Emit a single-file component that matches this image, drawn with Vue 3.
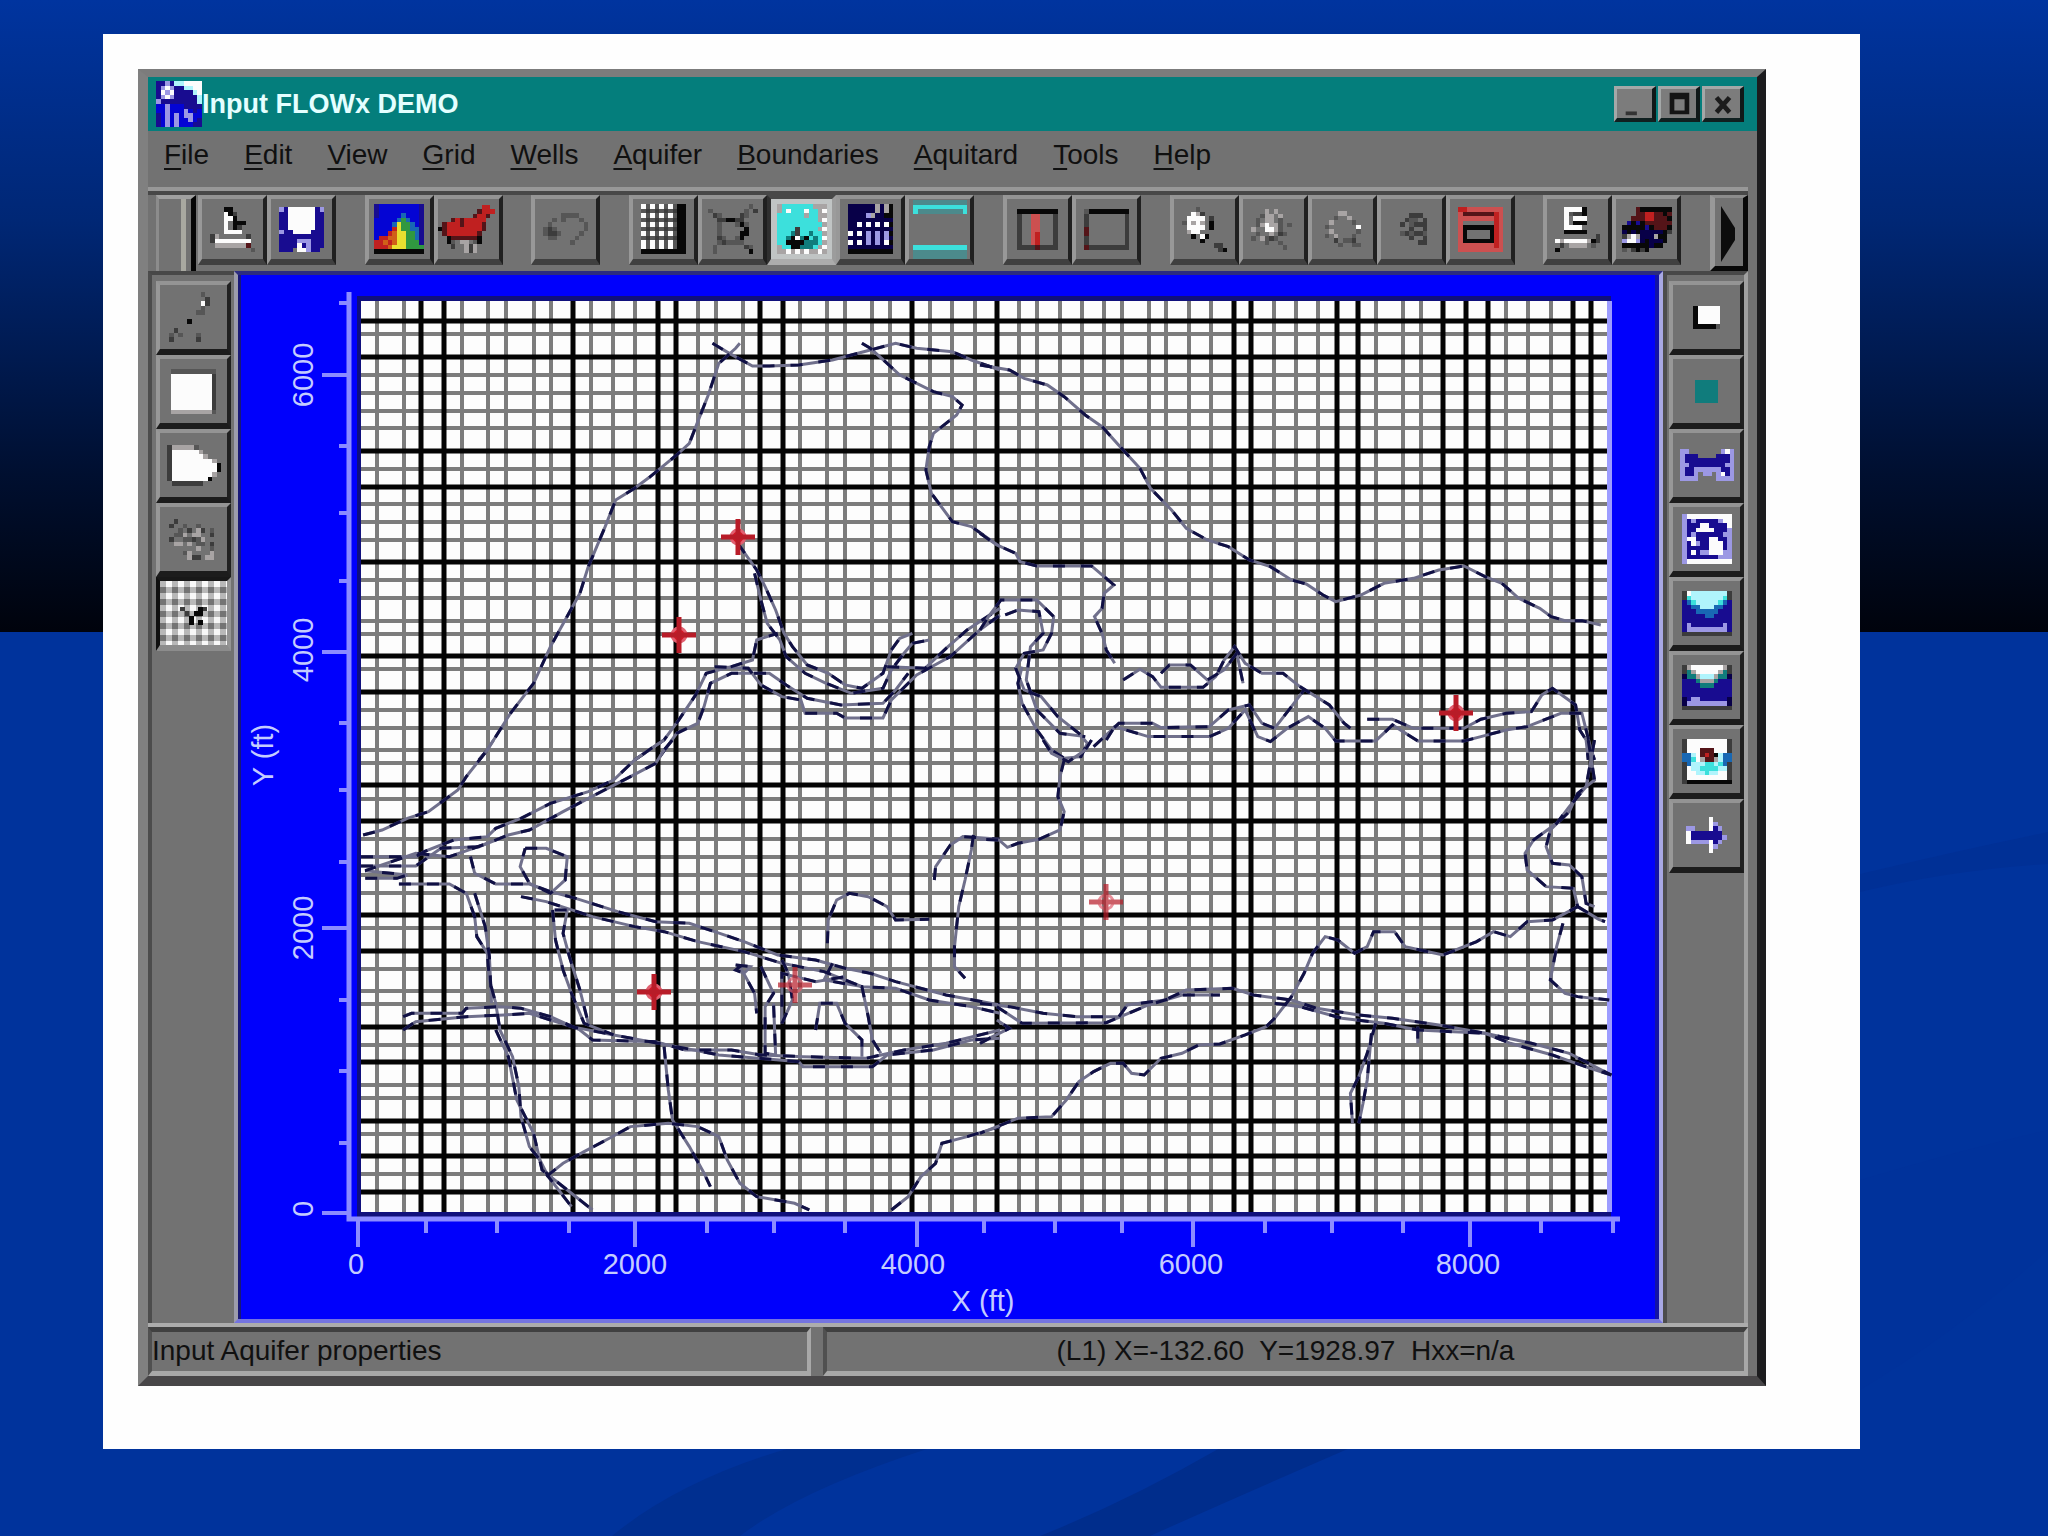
<template>
    <div class="slide">
        <svg class="backdrop" viewBox="0 0 2048 1536" preserveAspectRatio="none" aria-hidden="true">
            <defs>
                <linearGradient id="sky" x1="0" y1="0" x2="0" y2="1">
                    <stop offset="0" stop-color="#00349f" />
                    <stop offset="0.35" stop-color="#002775" />
                    <stop offset="0.75" stop-color="#000f30" />
                    <stop offset="1" stop-color="#00030c" />
                </linearGradient>
            </defs>
            <rect width="2048" height="1536" fill="#00339c" />
            <rect width="2048" height="632" fill="url(#sky)" />
            <path d="M1860 874Q1960 850 2048 832V864Q1950 870 1860 892Z" fill="#003096" />
            <path d="M612 1536Q680 1480 790 1448H930Q800 1490 740 1536Z" fill="#002f90" />
            <path d="M1040 1536Q1130 1500 1220 1448H1350Q1230 1500 1150 1536Z" fill="#002d8c" />
            <path d="M1860 1180Q1960 1150 2048 1130V1250Q1960 1330 1860 1390Z" fill="#00329b" />
        </svg>

        <main class="frame">
            <section class="window">
                <header class="titlebar">
                    <svg class="app-icon" viewBox="0 0 10 10" shape-rendering="crispEdges" aria-hidden="true">
                        <rect v-for="(p, i) in pixels(icons.app)" :key="i" :x="p.x" :y="p.y" :width="p.w" height="1" :fill="p.fill" />
                    </svg>
                    <h1>Input FLOWx DEMO</h1>
                    <div class="window-buttons">
                        <button type="button" aria-label="Minimize">
                            <svg viewBox="0 0 30 30"><path d="M5 23h12v4H5z" fill="#333" /></svg>
                        </button>
                        <button type="button" aria-label="Maximize">
                            <svg viewBox="0 0 30 30"><path d="M5 3h21v23H5zM10 10v12h11V10z" fill="#141414" fill-rule="evenodd" /></svg>
                        </button>
                        <button type="button" aria-label="Close">
                            <svg viewBox="0 0 30 30"><path d="M8 8l14 16M22 8L8 24" stroke="#1c1c1c" stroke-width="5" /></svg>
                        </button>
                    </div>
                </header>

                <nav class="menubar">
                    <button v-for="item in menus" :key="item" type="button"><u>{{ item[0] }}</u>{{ item.slice(1) }}</button>
                </nav>

                <div class="toolbar">
                    <div class="grip"></div>
                    <div class="groups">
                        <div v-for="(group, g) in toolbar" :key="g" class="group">
                            <button v-for="tool in group" :key="tool" type="button" class="tool" :class="{ pressed: tool === 'aquifer' }" :aria-label="tool">
                                <svg :viewBox="box(icons[tool])" :width="size(icons[tool][0].length)" :height="size(icons[tool].length)" shape-rendering="crispEdges">
                                    <rect v-for="(p, i) in pixels(icons[tool])" :key="i" :x="p.x" :y="p.y" :width="p.w" height="1" :fill="p.fill" />
                                </svg>
                            </button>
                        </div>
                        <button type="button" class="more" aria-label="More tools">
                            <svg viewBox="0 0 16 60"><path d="M0 4L14 26V38L0 60Z" fill="#0c0c0c" /></svg>
                        </button>
                    </div>
                </div>

                <div class="workspace">
                    <aside class="side left">
                        <button v-for="tool in leftTools" :key="tool" type="button" class="tool" :class="{ checked: tool === 'pick' }" :aria-label="tool">
                            <svg :viewBox="box(icons[tool])" :width="size(icons[tool][0].length)" :height="size(icons[tool].length)" shape-rendering="crispEdges">
                                <rect v-for="(p, i) in pixels(icons[tool])" :key="i" :x="p.x" :y="p.y" :width="p.w" height="1" :fill="p.fill" />
                            </svg>
                        </button>
                    </aside>

                    <div class="plot">
                        <svg viewBox="0 0 1414 1044" role="img" aria-label="Model grid">
                            <rect x="116" y="21" width="1254" height="921" fill="#10107c" />
                            <rect x="120" y="26" width="1250" height="911" fill="#fdfdfd" />
                            <path :d="lines(thinX, thinY)" stroke="#7c7c7c" stroke-width="4" />
                            <path :d="lines(thickX, thickY)" stroke="#040404" stroke-width="5" />
                            <rect x="1366" y="26" width="5" height="911" fill="#9c9cff" />

                            <g v-for="(tile, t) in tiles" :key="t" :transform="tile.at" class="trace">
                                <polyline v-for="(points, i) in tile.traces" :key="i" :points="points" />
                                <polyline v-for="(points, i) in tile.traces" :key="'d' + i" :points="points" class="dash" />
                            </g>

                            <g v-for="(well, i) in wells" :key="'w' + i" :transform="`translate(${well.x} ${well.y})`" :opacity="well.faded ? 0.7 : 1">
                                <circle r="7" :fill="well.faded ? 'none' : '#d81828'" stroke="#e06070" stroke-width="3" />
                                <path d="M-17 0H17M0-18V18" stroke="#b81c28" stroke-width="5" />
                            </g>

                            <g stroke="#8c8cff" stroke-width="4">
                                <path d="M108 17V944H1379" fill="none" stroke-width="5" />
                                <path v-for="(x, i) in ticksX" :key="'x' + i" :d="`M${x} 944V${i % 4 ? 958 : 972}`" />
                                <path v-for="(y, i) in ticksY" :key="'y' + i" :d="`M108 ${y}H${i % 4 ? 98 : 81}`" />
                            </g>
                            <g class="axis-text">
                                <text v-for="(x, i) in [115, 394, 672, 950, 1227]" :key="x" :x="x" y="999">{{ i * 2000 }}</text>
                                <text v-for="(y, i) in [934, 653, 375, 100]" :key="y" :transform="`translate(72 ${y}) rotate(-90)`">{{ i * 2000 }}</text>
                                <text x="742" y="1036">X (ft)</text>
                                <text transform="translate(32 480) rotate(-90)">Y (ft)</text>
                            </g>
                        </svg>
                    </div>

                    <aside class="side right">
                        <button v-for="tool in rightTools" :key="tool" type="button" class="tool" :aria-label="tool">
                            <svg :viewBox="box(icons[tool])" :width="size(icons[tool][0].length)" :height="size(icons[tool].length)" shape-rendering="crispEdges">
                                <rect v-for="(p, i) in pixels(icons[tool])" :key="i" :x="p.x" :y="p.y" :width="p.w" height="1" :fill="p.fill" />
                            </svg>
                        </button>
                    </aside>
                </div>

                <footer class="statusbar">
                    <div class="hint">Input Aquifer properties</div>
                    <div class="coords">(L1) X=-132.60&nbsp; Y=1928.97&nbsp; Hxx=n/a</div>
                </footer>
            </section>
        </main>
    </div>
</template>

<script setup>
const menus = ['File', 'Edit', 'View', 'Grid', 'Wells', 'Aquifer', 'Boundaries', 'Aquitard', 'Tools', 'Help']

const toolbar = [
    ['open', 'save'],
    ['spectrum', 'run'],
    ['undo'],
    ['grid', 'bounds', 'aquifer', 'cells', 'layers'],
    ['column', 'row'],
    ['zoom', 'zoomIn', 'zoomOut', 'pan', 'extent'],
    ['export', 'stack']
]
const leftTools = ['line', 'square', 'polygon', 'scatter', 'pick']
const rightTools = ['cell', 'zone', 'section', 'porosity', 'basin', 'head', 'plume', 'forward']

const palette = {
    w: '#fcfcfc', k: '#080808', d: '#3c3c3c', g: '#565656', l: '#a8a4a4',
    b: '#0404d4', n: '#180c90', v: '#080048', p: '#9c98e4', r: '#c02020',
    R: '#cc5050', m: '#541418', c: '#3ce0dc', t: '#107c7c', q: '#4c8a8c',
    y: '#e8e030', o: '#d06018', e: '#309840', s: '#1868b4', i: '#b0f4fc'
}

// Icons are drawn as pixel rows, one palette letter per pixel
const icons = {
    app: ['nnpniiwwww', 'npwpnniiww', 'nwpwnnnniw', 'npwpnnnnni', 'pnnnnnnnni', 'bbpbbbnnnn', 'bbpbbbpbnb', 'nbpbpbppbb', 'nbpbpbbpbn', 'nbpbpbbbnn'],
    open: ['...kk.....', '...wkd....', '...wwk....', '...w.kkk..', '...w.kd...', '...wwww...', 'dl......d.', 'dwwwwwwww.', '.lllllllm.', '.........g'],
    save: ['pnwwwwwwnp', 'nnwwwwwwnn', 'nnwwwwwwnn', 'nnwwwwwwnn', 'nnwwwwwwnn', 'pnnwwwwnnn', 'nnnnnnnnnn', 'nnnnpppnnn', 'nnnnwnpnnn', 'nnn.wwpnn.'],
    spectrum: ['nbbbbbbbbbn', 'nbbbbbbbbbn', 'nbbbbbsbbbn', 'bbbbbsesbbn', 'bbbbsyeesbn', 'bbbbryeessn', 'bbbroyyeesn', 'brrooyyeesn', 'rroroyyeeen', 'rrroyyyeeee', 'kkkkkkkkkkk'],
    run: ['..........rr..', '.........mrrr.', '........mrrm..', '...mrmrrrrr...', '.mrrrmrrrrm...', 'kmrrrrrrrrm...', '.mrrrrrrrm....', '..kmmmmmmk....', '..kg.ll.gk....', '...d..ldl.....', '......ldl.....'],
    undo: ['....gggg..', '..g.g...g.', '.g.......g', 'gdg......g', 'gddg....g.', '.gg....g..', '......g...'],
    grid: ['wgwgwgwgkk', 'gdgdgdgdkk', 'wgwgwgwgkk', 'gdgdgdgdkk', 'wgwgwgwgkk', 'gdgdgdgdkk', 'wgwgwgwgkk', 'gdgdgdgdkk', 'wgwgwgwgkk', 'wgwgwgwgkk', 'kkkkkkkkkk'],
    bounds: ['.........g.', 'g.......g.d', '.dg....dg..', '..ddkkdd...', '..g...gkg..', '..g.....k..', '..g....kk..', '..dg..gk...', '..gdgggg...', '.g......dg.', '.g.......k.'],
    aquifer: ['lccccccclll', 'lcwcccwcclw', 'cccccclccll', 'ccccccccclw', 'ccccccccccl', 'ccccdcccclw', 'ccctdcctccl', 'cctkwtkctcw', 'cckkkktttcl', 'lcckktttclw', 'llwlwlwllwl'],
    cells: ['vvvvvvlvlk', 'vvvvvvlvlk', 'vvvvplvvkk', 'vvvvvvvvvv', 'vvwvwvwvwk', 'vvvvvvvvvv', 'wvwvpvpvpk', 'vvvvpvpvpv', 'wvwvpvpvwk', 'vvvvvvvvvv', 'kkkkkkkkkk'],
    layers: ['qqqqqqqqqqqq', 'cccccccccccc', 'cqqqqqqqqqqc', '............', '............', '............', '............', '............', '............', '............', 'cccccccccccc', 'qqqqqqqqqqqq', 'qqqqqqqqqqqq'],
    column: ['kkkkkkkkk', 'd..RR...d', 'd..RR...d', 'd..RR...d', 'd..RR...d', 'd..Rr...d', 'd..Rr...d', 'd..Rr...d', 'ddddmdddd'],
    row: ['gkkkkkkkkk', 'd........d', 'd........d', 'd........d', 'm........d', 'm........d', 'd........d', 'd........d', 'mddddddddd'],
    zoom: ['...g......', '..wld.....', '.wwww.d...', 'gwlwl.k...', '.wwww.k...', '.lww......', '..k.wk....', '....k.....', '.......dd.', '........dk'],
    zoomIn: ['...l.l....', '..gll.l...', '.g.ll.g...', '.glwllg.g.', 'l..wwlg...', '.g..l.dg..', 'g.lgdg....', '...g..g...', '.......g..'],
    zoomOut: ['....ll....', '...g..l...', '..l....g..', '.g......w.', '..l.....g.', '.g.l...g..', '...d.ggd..', '....g..gg.'],
    pan: ['....ddd..', '...dgg.d.', '..d.gddd.', '....d..d.', '..gdgddg.', '....d..d.', '......dd.'],
    extent: ['rrRRRRRRRR', 'RmmmmmmmrR', 'RRRRRRRRrR', 'R.......rR', 'RkkkkkkkrR', 'Rk.....krR', 'Rk.....krR', 'RkkkkkkkrR', 'RRRRRRRRrR', 'RRRRRRRRRR'],
    export: ['..wwwwk...', '..wgddk...', '..w.www...', '..w.kkk...', '..wwww....', '..kkkkk...', '.........d', 'wlwwwwwlkd', '.d.llll.g.', 'k.........'],
    stack: ['...mkkkkkkk', '...mmrrmmkm', '..mmmrrmmmk', '.nknkmmmmmm', 'kkkkknkmmmk', 'vkvkvvvvvkd', 'dlwlvvvlkk.', 'pwwpvkvvvk.', 'kkkkkkvkk..', 'g.dkdk.....'],
    line: ['.......g...', '........d..', '.......wd..', '.......g...', '......gg...', '...........', '....k......', '...........', '.d.........', 'g.g...g....', 'd.....d....'],
    square: ['gggggggggg', 'wwwwwwwwwd', 'wwwwwwwwwd', 'wwwwwwwwwd', 'wwwwwwwwwd', 'wwwwwwwwwd', 'wwwwwwwwwd', 'wwwwwwwwwd', 'wwwwwwwwwd', 'lllllllllg'],
    polygon: ['dlllllg.....', 'dwwwwwwl....', 'dwwwwwwwl...', 'dwwwwwwwwwl.', 'dwwwwwwwwwwk', 'dwwwwwwwwwwk', 'dwwwwwwwwwl.', 'dwwwwwwwwk..', '.ddddddd....'],
    scatter: ['.d.........', 'd..g..g....', '..g.d.ld.g.', '.ggl.ll..d.', 'd..ggdgl...', '.ll.l.gg.d.', '......l..g.', '...gl....l.', '....ldd.ll.'],
    pick: ['......', 'd...kd', '.d.kk.', '..k...', '..k.k.'],
    cell: ['kwwwww', 'kwwwww', 'kwwwww', 'kwwwww', 'kkkkkg'],
    zone: ['ttttt', 'ttttt', 'ttttt', 'ttttt', 'ttttt'],
    section: ['pp.......pwp', 'pnnn....nnnp', 'pnnnnnnnnnnp', 'ppnnnnnnnnpp', 'pnnppppppnnp', 'pnnp.pp.pwnp', 'pppp....pppp'],
    porosity: ['pwwwwwwwwww', 'pnpnnnnnpww', 'pnnnwwnnnnw', 'pnnwwwwnnnp', 'pnpnnnnnnpp', 'pwwnnnwwnnp', 'pnwpnnwwwnp', 'pnnnnnwwwnp', 'pnwnppwwwpp', 'pnnnnnnnppp', 'pwwwwwwwwww'],
    basin: ['dwiiiiiiiid', 'dciiiiiiicd', 'nsciiiiicsn', 'nnssiiissnn', 'nnnsssssnnn', 'nnnnnssnnnn', 'nnnnnnnnnnn', 'npnnnnnnnpn', 'npppppppppn', 'ddddddddddd'],
    head: ['dlwwwwwwwld', 'dtlwwwwwltd', 'vttliiilttv', 'nnntllltnnn', 'nnnntttnnnn', 'nnnnnnnnnnn', 'nnnnnnnnnnn', 'vnppnnnnnnv', 'vpppppppppv', 'ddddddddddd'],
    plume: ['dwwwwwwwwwd', 'dwwwwwwwwwd', 'dwwwmmmwwwd', 'ssiwmrmkiss', 'sscwlmmliss', 'dsiiiccicsd', 'dwiicccciid', 'dwwiiciiwwd', 'dwwwwwwwwwd', 'dkkkkkkkkkk'],
    forward: ['.....w...', '.....wp..', 'pp...wnp.', 'wnnnnnnn.', 'wnnnnnnnp', 'wppppwnp.', '.....wp..', '.....w...']
}

// Neighbouring pixels of one colour become a single rect
const pixels = (rows) => {
    const out = []
    rows.forEach((row, y) => {
        let x = 0
        while (x < row.length) {
            let end = x + 1
            while (row[end] === row[x]) end++
            if (row[x] !== '.') out.push({ x, y, w: end - x, fill: palette[row[x]] })
            x = end
        }
    })
    return out
}
const box = (rows) => `0 0 ${rows[0].length} ${rows.length}`
const size = (n) => Math.round(n * 4.5)

const thickX = [180, 203, 332, 417, 435, 519, 542, 671, 756, 993, 1010, 1096, 1117, 1202, 1225, 1247, 1332, 1350]
const thinX = [136, 163, 221, 247, 265, 293, 310, 350, 372, 394, 457, 475, 502, 559, 586, 604, 631, 649, 689, 711, 734, 778, 796, 819, 841, 863, 881, 908, 925, 948, 970, 1033, 1055, 1077, 1135, 1162, 1180, 1265, 1287, 1310]
const thickY = [46, 82, 176, 212, 287, 381, 417, 510, 546, 640, 676, 752, 787, 846, 881, 917]
const thinY = [59, 100, 118, 136, 153, 194, 229, 247, 265, 305, 323, 346, 359, 394, 435, 453, 475, 488, 524, 564, 582, 600, 618, 653, 694, 716, 729, 770, 810, 823, 859, 899]
const lines = (xs, ys) => xs.map((x) => `M${x} 26V937`).join('') + ys.map((y) => `M120 ${y}H1370`).join('')

const ticksX = [117, 185, 256, 328, 394, 466, 533, 604, 676, 743, 814, 881, 952, 1024, 1091, 1162, 1229, 1300, 1372]
const ticksY = [938, 868, 796, 725, 653, 587, 515, 448, 377, 306, 238, 171, 100, 28]

const wells = [
    { x: 497, y: 262 },
    { x: 438, y: 360 },
    { x: 1215, y: 438 },
    { x: 413, y: 717 },
    { x: 554, y: 710, faded: true },
    { x: 865, y: 627, faded: true }
]

// The base map comes in four sheets: NW, NE, SW, SE
const tiles = [
    {
        at: 'translate(99 5) scale(.4209 .3333)',
        traces: [
            '330,1440 350,1410 405,1300 460,1210 500,1100 535,1020 570,940 590,860 610,800 630,740 655,660 700,625 735,592 800,525 830,490 850,425 875,345 900,250 940,205 950,190',
            '885,190 925,220 980,258 1020,258 1090,255 1170,240 1260,210 1320,190 1370,205 1455,215 1500,240 1568,270',
            '1240,190 1260,205 1300,250 1330,285 1410,335 1455,350 1478,375 1465,405 1410,460 1400,500 1392,570 1405,640 1455,725 1500,740 1568,800',
            '945,790 990,870 1010,920 1035,990 1055,1060 1075,1100 1110,1155 1160,1180 1200,1215 1240,1225 1290,1180 1310,1110 1330,1075 1360,1060',
            '985,880 1000,960 1015,1030 1045,1080 1060,1130 1105,1180 1155,1210 1215,1240 1290,1225 1310,1170 1340,1120 1360,1090 1400,1080',
            '700,1440 770,1380 805,1320 845,1245 870,1180 930,1160 980,1140 990,1080 1040,1060',
            '760,1430 800,1360 850,1330 865,1280 880,1210 930,1180 1020,1180 1060,1215 1110,1255 1190,1275 1290,1270 1320,1230 1350,1180',
            '890,1160 970,1165 1000,1215 1050,1250 1095,1260 1105,1300 1180,1300 1200,1314 1290,1314 1310,1260 1370,1185 1450,1130 1520,1050 1568,1005',
            '1300,1160 1390,1165 1440,1105 1490,1050 1568,985'
        ]
    },
    {
        at: 'translate(739 5) scale(.4209 .3333)',
        traces: [
            '0,255 70,270 105,295 160,315 200,350 250,405 290,440 340,510 380,565 405,625 455,690 490,745 540,780 590,800 640,840 690,860 740,900 775,912 815,945 845,965 905,945 960,910 1030,895 1090,870 1150,858 1200,890 1240,910 1280,955 1330,985 1357,1010 1390,1022 1430,1022 1475,1035',
            '0,760 40,795 85,820 95,845 135,858 265,858 295,890 318,915 295,940 290,985 272,1010 290,1060 300,1110 320,1150',
            '340,1200 380,1168 410,1190 430,1222 530,1222 560,1190 580,1140 605,1100 630,1150 670,1180 720,1180 760,1220 830,1275 865,1330 880,1345',
            '430,1180 450,1155 500,1155 540,1200 580,1170 610,1120 625,1210',
            '0,1050 20,1010 50,960 135,960 175,1010 170,1060 150,1110 105,1120 85,1165 105,1230 145,1250 185,1310 235,1360 255,1390 240,1430 200,1435 170,1410 135,1350 100,1270 90,1210 100,1160',
            '60,1005 90,990 140,995 150,1060 120,1100 110,1200 135,1290 190,1360 250,1370',
            '270,1400 330,1330 410,1330 430,1343 545,1340 590,1290 640,1275 670,1330 700,1345 740,1280 770,1230',
            '300,1380 320,1340 400,1370 430,1370 545,1370 590,1345 630,1290 660,1370 690,1385 730,1345 780,1310 820,1345 845,1383 940,1383 980,1335 1040,1383 1150,1383 1190,1370 1250,1350 1300,1340 1380,1300 1430,1300 1450,1400 1460,1440',
            '920,1318 980,1318 1030,1345 1150,1345 1190,1318 1250,1300 1310,1295 1335,1245 1360,1225 1415,1275 1425,1350 1440,1380 1445,1440'
        ]
    },
    {
        at: 'translate(99 465) scale(.4209 .3333)',
        traces: [
            '55,285 100,270 160,235 210,215 280,150 300,110 350,30 365,0',
            '50,350 180,350 200,335 270,300 350,290 370,265 430,235 500,190 590,155 650,120 700,60 740,25 770,0',
            '50,378 180,378 240,325 330,320 400,285 450,270 530,215 590,175 690,110 750,70 770,30 790,0',
            '60,415 135,415 160,405 60,392 180,340 260,350 350,310',
            '140,432 260,432 300,460 320,530 325,590 350,640 355,720 370,790 380,870 410,950 425,1040 430,1130 450,1220 475,1260 495,1310 550,1400',
            '310,350 320,400 370,432 450,432 500,455 560,475 660,515 750,545 830,550 890,575 960,605 1040,645 1130,660 1200,685 1260,700 1320,725 1440,765 1568,795',
            '430,470 490,485 600,530 700,560 770,575 850,605 960,635 1050,670 1150,695 1240,740 1320,745 1400,780 1500,800 1568,820',
            '440,325 490,325 540,350 535,420 500,460 450,430 428,380 440,325',
            '505,510 512,600 530,690 550,760 580,850 650,885',
            '510,510 540,510 530,580 545,650 570,750 590,850',
            '150,830 170,820 290,820 300,805 380,800 430,805 500,830 570,870 600,900 750,905 820,930 930,930 1000,945 1100,950 1250,955 1340,930 1440,910 1568,870',
            '150,870 180,845 300,830 390,825 450,820 550,860 650,885 800,920 900,945 1090,965 1100,980 1265,980 1300,945 1410,930 1500,900 1568,895',
            '320,460 345,560 355,650 360,790',
            '370,870 400,950 420,1080 460,1180 480,1290 600,1410',
            '490,1310 530,1270 580,1235 640,1195 690,1160 780,1150 850,1160 900,1190 920,1260 950,1330 990,1370 1080,1390 1115,1410',
            '770,920 780,1050 790,1140 830,1220 865,1300 880,1340',
            '940,675 975,680 960,700 940,690 950,680 985,760 990,820',
            '1000,680 1030,760 1010,800 1010,940 1035,945 1030,790',
            '1050,660 1065,700 1075,780 1050,850 1050,700 1130,725 1200,710',
            '1130,870 1140,790 1180,790 1200,850 1240,900 1240,950',
            '1170,670 1150,720 1240,740 1255,830 1265,900 1285,940',
            '1158,610 1160,540 1180,480 1210,460 1255,470 1300,500 1320,540 1400,538',
            '1412,420 1415,380 1450,315 1480,290 1568,298',
            '1505,285 1500,330 1485,420 1470,500 1460,620 1460,680 1485,715',
            '1310,1410 1350,1370 1380,1310 1415,1270 1430,1210 1490,1190 1568,1160'
        ]
    },
    {
        at: 'translate(739 465) scale(.4209 .3333)',
        traces: [
            '150,0 170,40 210,65 250,30 265,0',
            '200,60 190,110 185,170 200,215 190,270 140,298 90,310 65,322 45,300 0,298',
            '1445,0 1460,120 1420,160 1400,215 1355,270 1345,320 1360,370 1400,375 1430,410 1440,490 1460,500',
            '1460,0 1440,140 1400,200 1370,250 1315,300 1295,340 1300,390 1345,440 1410,445 1420,500 1360,540 1300,545 1260,590 1220,575 1180,605 1100,645 1010,620 985,575 935,575 920,620 890,640 850,600 820,590 790,640 770,700 740,770 700,835 680,860 630,885 570,912 520,915 480,940 430,955 390,1005 360,1000 340,970 310,970 270,995 235,1025 205,1080 170,1130 90,1135 30,1165 0,1180',
            '1385,550 1370,620 1355,720 1390,760 1420,770 1495,780',
            '1420,500 1470,538 1485,545',
            '0,790 70,800 150,820 230,830 330,830 350,795 440,780 490,750 600,745 650,765 740,780 800,805 900,825 980,835 1090,855 1200,880 1310,910 1400,940 1500,1005',
            '40,800 100,850 300,848 400,795 480,765 570,765',
            '700,790 760,800 860,835 960,850 1040,870 1200,880 1260,910 1360,945 1450,985 1500,1005',
            '0,910 30,890 70,865 40,840',
            '940,850 920,940 900,1010 880,1060 885,1150',
            '930,880 920,1020 910,1090 900,1150',
            '1040,860 1040,910'
        ]
    }
]
</script>

<style>
body {
    background: #00339c;
}
</style>

<style scoped>
.slide {
    position: relative;
    box-sizing: border-box;
    min-height: 100vh;
    padding: 34px 188px 86px 103px;
    font-family: Arial, 'Liberation Sans', sans-serif;
    color: #101010;
}

.backdrop {
    position: absolute;
    inset: 0;
    width: 100%;
    height: 100%;
}

.frame {
    position: relative;
    padding: 35px 94px 63px 35px;
    background: #fefefe;
}

.window {
    background: #727272;
    border-style: solid;
    border-width: 8px 9px 10px 10px;
    border-color: #7c7c7c #1c1c1e #484648 #808080;
}

button {
    margin: 0;
    padding: 0;
    font: inherit;
    color: inherit;
    background: none;
    border: 0;
    border-radius: 0;
}

.titlebar {
    display: flex;
    align-items: center;
    height: 54px;
    padding: 0 13px 0 8px;
    background: #047e7c;
}

.app-icon {
    width: 46px;
    height: 46px;
}

h1 {
    margin: 0;
    font-size: 27px;
    line-height: 32px;
    color: #e4ffff;
}

.window-buttons {
    display: flex;
    gap: 2px;
    margin-left: auto;
}

.window-buttons button {
    display: flex;
    align-items: center;
    justify-content: center;
    width: 42px;
    height: 36px;
    background: #7c7c7c;
    border-style: solid;
    border-width: 3px 4px 4px 3px;
    border-color: #a4a8a8 #101818 #102020 #a4a8a8;
}

.window-buttons svg {
    width: 28px;
    height: 28px;
}

.menubar {
    display: flex;
    gap: 35px;
    align-items: flex-start;
    box-sizing: border-box;
    height: 56px;
    padding: 8px 16px 0;
}

.menubar button {
    font-size: 28px;
    line-height: 32px;
}

.menubar u {
    text-decoration-thickness: 2px;
    text-underline-offset: 4px;
}

.toolbar {
    display: flex;
    box-sizing: border-box;
    height: 84px;
    margin-right: 9px;
    border-top: 4px solid #989898;
    box-shadow: inset 0 4px #484848;
}

.grip {
    width: 32px;
    margin: 4px 0 0 8px;
    border-top: 4px solid #a0a0a0;
    border-right: 5px solid #040404;
    border-left: 3px solid #8c8c8c;
    background: linear-gradient(90deg, transparent 22px, #a8a8a0 22px, #a8a8a0 27px, transparent 27px);
}

.groups {
    display: flex;
    flex: 1;
    justify-content: space-between;
    align-items: flex-start;
    padding: 4px 0 0 2px;
}

.group {
    display: flex;
}

.tool {
    display: flex;
    align-items: center;
    justify-content: center;
    box-sizing: border-box;
    width: 69px;
    height: 70px;
    background: #727272;
    border-style: solid;
    border-width: 4px 4px 6px 4px;
    border-color: #949494 #202020 #404040 #989898;
}

.pressed {
    background: #c0c4c4;
    border-color: #484848 #9c9c9c #acacac #303030;
}

.more {
    display: flex;
    align-items: center;
    justify-content: center;
    width: 38px;
    height: 76px;
    border-style: solid;
    border-width: 3px 5px 5px;
    border-color: #8c8c8c #080808 #080808 #989898;
}

.more svg {
    width: 16px;
    height: 60px;
}

.workspace {
    display: flex;
    margin-right: 9px;
}

.side {
    box-sizing: border-box;
    display: flex;
    flex: none;
    flex-direction: column;
    border-top: 4px solid #484848;
}

.side .tool {
    width: 75px;
    height: 74px;
    border-bottom-color: #1c1c1c;
}

.left {
    width: 86px;
    padding: 6px 0 0 4px;
    border-left: 4px solid #4c4c4c;
}

.right {
    width: 85px;
    padding: 6px 0 0 2px;
    border-right: 4px solid #a0a0a0;
    border-left: 4px solid #4c4c4c;
}

.left .checked {
    border-color: #181818 #949494 #8c8c8c #101010;
    background: conic-gradient(#f8f8f8 25%, #b8b8b8 0 50%, #747474 0 75%, #b8b8b8 0) 0 0 / 12px 12px;
}

.plot {
    flex: 1;
    background: #0000fc;
    border-style: solid;
    border-width: 4px;
    border-color: #2c2c80 #a8a8e4 #7474e0 #9c9cac;
    box-shadow: inset 3px 0 #181878, inset -4px 0 #1414a4;
    padding: 0 4px 0 3px;
}

.plot svg {
    display: block;
    width: 100%;
    height: auto;
}

.trace {
    fill: none;
    stroke: #70708c;
    stroke-width: 3px;
}

.trace polyline {
    vector-effect: non-scaling-stroke;
}

.trace .dash {
    stroke: #101044;
    stroke-dasharray: 12 16;
}

.axis-text {
    font-size: 29px;
    fill: #c4ccff;
    text-anchor: middle;
}

.statusbar {
    display: flex;
    gap: 12px;
    margin-right: 9px;
    border-top: 4px solid #acacac;
    font-size: 28px;
    line-height: 38px;
}

.statusbar div {
    box-sizing: border-box;
    height: 49px;
    border-style: solid;
    border-width: 5px 4px;
    border-color: #404040 #a8a8a8 #a8a8a8 #505050;
    white-space: nowrap;
}

.hint {
    flex: 5;
}

.coords {
    flex: 7;
    text-align: center;
}
</style>
